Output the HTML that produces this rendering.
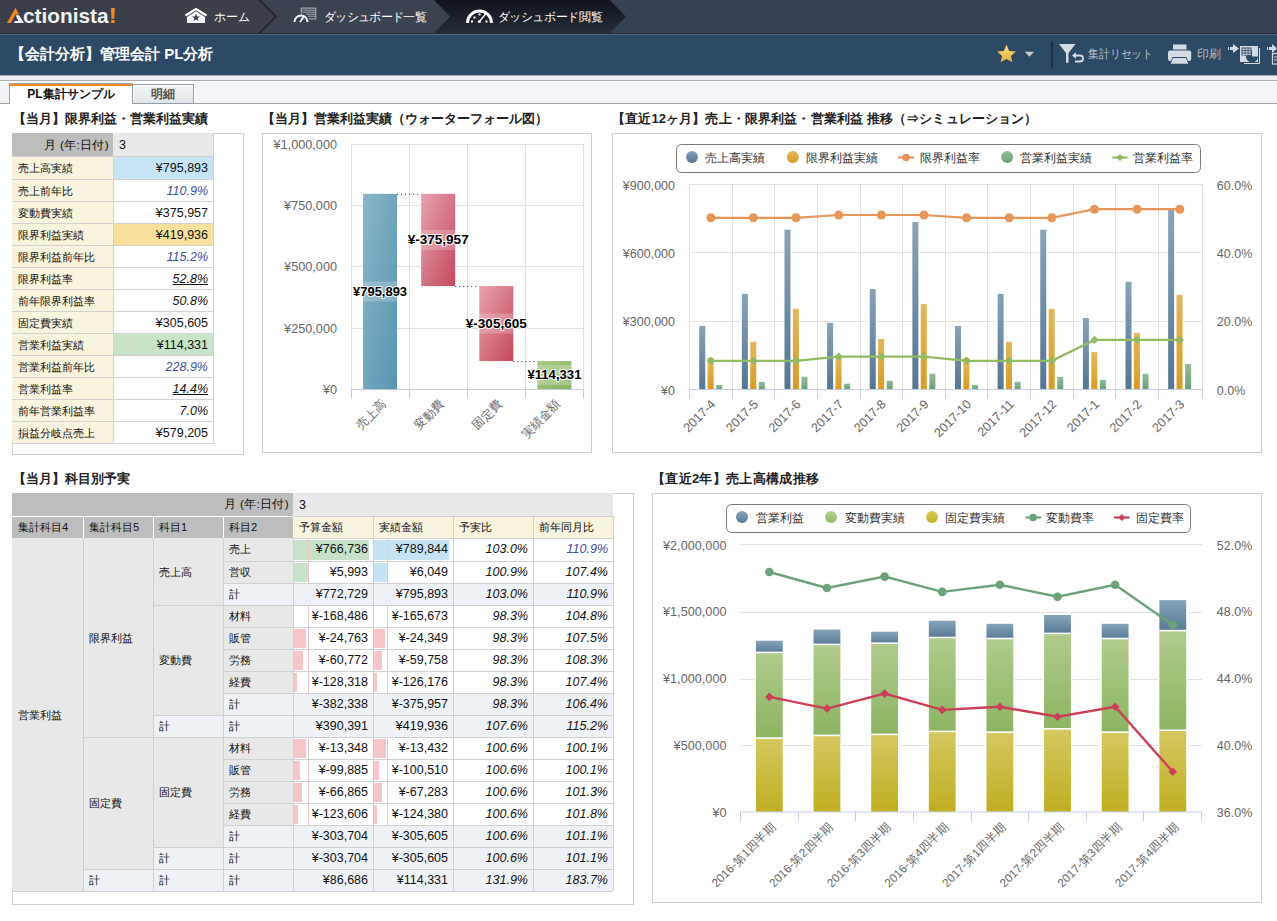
<!DOCTYPE html>
<html><head><meta charset="utf-8"><style>*{box-sizing:border-box;margin:0;padding:0}
html,body{width:1277px;height:921px;overflow:hidden;background:#fff;font-family:"Liberation Sans",sans-serif;color:#222}
.abs{position:absolute}
.ptitle{position:absolute;font-size:13px;font-weight:bold;color:#222;white-space:nowrap;line-height:16px}
.box{position:absolute;border:1px solid #cdcdcd}
.r{position:absolute}
.t{position:absolute;white-space:nowrap;font-size:11.2px;line-height:22px;color:#111}
.n{position:absolute;white-space:nowrap;font-size:12.5px;line-height:22px;color:#111;text-align:right}
.i{font-style:italic}
.bl{color:#3d4ea6}
.u{text-decoration:underline}
svg text{font-family:"Liberation Sans",sans-serif}
</style></head><body>
<svg class="abs" style="left:0;top:0" width="1277" height="34" viewBox="0 0 1277 34">
<defs>
<linearGradient id="g3" x1="0" y1="0" x2="0" y2="1"><stop offset="0" stop-color="#0f141c"/><stop offset="1" stop-color="#262d38"/></linearGradient>
<linearGradient id="gstar" x1="0" y1="0" x2="0" y2="1"><stop offset="0" stop-color="#fbe27a"/><stop offset="1" stop-color="#e6ae3a"/></linearGradient>
</defs>
<rect x="0" y="0" width="1277" height="34" fill="#3a3f4a"/>
<polygon points="259,0 434,0 450,16.5 434,33 259,33 276,16.5" fill="#3c4350"/>
<polygon points="434,0 610,0 626,16.5 610,33 434,33 450,16.5" fill="url(#g3)"/>
<polygon points="610,0 1277,0 1277,33 610,33 626,16.5" fill="#364254"/>
<polyline points="259,-0.5 276,16.5 259,33.5" fill="none" stroke="#1d2129" stroke-width="1.6"/>
<rect x="0" y="33" width="1277" height="1" fill="#262a31"/>
<!-- logo -->
<polygon points="6.9,23 15.5,7.8 19.1,14.4 15.4,14.4 10.8,23" fill="#f28a22"/>
<polygon points="15.6,15.2 19.1,15.2 24,23 13.8,23 14.9,21 18.4,21" fill="#f4f4f4"/>
<text x="23" y="23" font-family="Liberation Sans" font-weight="bold" font-size="21" fill="#f2f2f2" textLength="85.5" lengthAdjust="spacingAndGlyphs">ctionista</text>
<polygon points="111,8 114.8,8 114.3,18.8 111.5,18.8" fill="#f28a22"/><rect x="111.2" y="20" width="3.4" height="3" fill="#f28a22"/>
<!-- home icon -->
<polyline points="185.5,15.5 196,9 206.5,15.5" fill="none" stroke="#fff" stroke-width="2.2"/>
<polygon points="187,17 196,11.3 205,17 205,23 187,23" fill="#f4f5f8"/>
<polygon points="196,13.6 197.1,16.4 200,16.5 197.7,18.3 198.5,21 196,19.4 193.5,21 194.3,18.3 192,16.5 194.9,16.4" fill="#3a3f4a"/>
<text x="214" y="20.5" font-size="12" fill="#fff">ホーム</text>
<!-- list icon -->
<rect x="301.3" y="8.1" width="14.4" height="10.8" fill="none" stroke="#a4a8b0" stroke-width="1.2"/>
<path d="M302.5 10.2H315M302.5 12.2H315M306 14.2H315M308 16.2H315" stroke="#a4a8b0" stroke-width="1"/>
<path d="M294.5 22 A6.5 6.5 0 0 1 307.5 22" fill="none" stroke="#3c4350" stroke-width="4"/>
<path d="M294.5 22 A6.5 6.5 0 0 1 307.5 22" fill="none" stroke="#fff" stroke-width="2"/>
<path d="M300 22 L303.5 17" stroke="#fff" stroke-width="1.4"/>
<text x="324" y="20.5" font-size="12" fill="#fff" textLength="102.5" lengthAdjust="spacing">ダッシュボード一覧</text>
<!-- gauge icon -->
<path d="M467.5 23 A12 12 0 0 1 491.5 23" fill="none" stroke="#fff" stroke-width="3"/>
<rect x="471" y="20.5" width="2" height="2" fill="#fff"/><rect x="485.5" y="20.5" width="2" height="2" fill="#fff"/>
<rect x="473.5" y="16.5" width="2" height="2" fill="#fff"/><rect x="478.5" y="13.5" width="2" height="2" fill="#fff"/>
<path d="M479.4 21.5 L486 13.5" stroke="#fff" stroke-width="1.3"/><circle cx="479.4" cy="21.5" r="1.6" fill="#fff"/>
<text x="497.5" y="20.5" font-size="12" fill="#fff" textLength="105" lengthAdjust="spacing">ダッシュボード閲覧</text>
</svg>
<div class="r" style="left:0px;top:34px;width:1277px;height:41px;background:#2c4a66;"></div>
<div class="r" style="left:0px;top:34px;width:1277px;height:1px;background:#4a6888;"></div>
<svg class="abs" style="left:0;top:34px" width="1277" height="41" viewBox="0 34 1277 41">
<polygon points="1006.5,44.7 1009.2,50.9 1015.9,51.5 1010.9,55.9 1012.4,62.3 1006.5,58.9 1000.6,62.3 1002.1,55.9 997.1,51.5 1003.8,50.9" fill="url(#gstar)"/>
<polygon points="1024.8,51.8 1034,51.8 1029.4,56.8" fill="#c5ccd6"/>
<rect x="1051.3" y="41" width="1.4" height="27" fill="#1b2636"/>
<polygon points="1059,44 1075.5,44 1068.5,53 1068.5,62.7 1066,62.7 1066,53" fill="#d5dbe3"/>
<path d="M1074 55.5 h6 a3 3 0 0 1 0 6 h-5" fill="none" stroke="#d5dbe3" stroke-width="1.8"/>
<polygon points="1072,55.5 1076,52.2 1076,58.8" fill="#d5dbe3"/>
<text x="1088" y="58.3" font-size="11.6" fill="#b8c0ca" textLength="65" lengthAdjust="spacingAndGlyphs">集計リセット</text>
<rect x="1173" y="44.5" width="13.5" height="5" fill="#d5dbe3"/>
<rect x="1168" y="50.5" width="23.2" height="10.5" rx="2" fill="#d5dbe3"/>
<polygon points="1172.5,57 1186.5,57 1189,64 1170,64" fill="#2c4a66"/>
<polygon points="1173,58 1186,58 1188.3,63.8 1170.7,63.8" fill="#d5dbe3"/>
<text x="1197" y="58.3" font-size="11.8" fill="#b4bcc6">印刷</text>
<rect x="1228" y="47" width="1" height="3" fill="#d5dbe3"/><rect x="1230" y="47" width="3" height="3" fill="#d5dbe3"/>
<polygon points="1233,44 1239,48.5 1233,53" fill="#d5dbe3"/>
<polyline points="1259.5,48 1259.5,63.5 1244,63.5" fill="none" stroke="#d5dbe3" stroke-width="1"/>
<rect x="1240" y="46" width="18" height="16" fill="#d5dbe3"/>
<path d="M1252 56.5 L1252 50.5 A6 6 0 1 0 1258 56.5 Z" fill="#2c4a66"/>
<rect x="1241.5" y="47.5" width="10" height="8" fill="#2c4a66"/>
<g fill="#d5dbe3"><rect x="1242.5" y="48.5" width="2.2" height="1.6"/><rect x="1245.5" y="48.5" width="2.2" height="1.6"/><rect x="1248.5" y="48.5" width="2.2" height="1.6"/>
<rect x="1242.5" y="51" width="2.2" height="1.6"/><rect x="1245.5" y="51" width="2.2" height="1.6"/><rect x="1248.5" y="51" width="2.2" height="1.6"/>
<rect x="1242.5" y="53.5" width="2.2" height="1.6"/><rect x="1245.5" y="53.5" width="2.2" height="1.6"/><rect x="1248.5" y="53.5" width="2.2" height="1.6"/></g>
<rect x="1267" y="47" width="1" height="3" fill="#d5dbe3"/><rect x="1269" y="47" width="3" height="3" fill="#d5dbe3"/>
<polygon points="1272,44 1277,48.5 1272,53" fill="#d5dbe3"/>
<rect x="1272.5" y="53.5" width="6" height="10.5" fill="none" stroke="#d5dbe3" stroke-width="1.2"/>
<path d="M1274 57h3M1274 60h3" stroke="#d5dbe3" stroke-width="1"/>
</svg>
<div class="abs" style="left:10px;top:45px;font-size:15px;font-weight:bold;color:#fff;white-space:nowrap;line-height:17px">【会計分析】管理会計 PL分析</div>
<div class="r" style="left:0px;top:75px;width:1277px;height:1px;background:#a9abaf;"></div>
<div class="r" style="left:0px;top:76px;width:1277px;height:4px;background:#eceef1;"></div>
<div class="r" style="left:0px;top:80px;width:1277px;height:1px;background:#a3abb5;"></div>
<div class="r" style="left:0px;top:81px;width:1277px;height:22px;background:#ffffff;"></div>
<div class="r" style="left:0px;top:82px;width:9px;height:21px;background:#f1f3f6;"></div>
<div class="r" style="left:195px;top:82px;width:1082px;height:21px;background:#f2f4f7;"></div>
<div class="r" style="left:0px;top:103px;width:1277px;height:1px;background:#a3a3a3;"></div>
<div class="r" style="left:9px;top:83px;width:124px;height:21px;background:#fff;border:1px solid #98a2ad;border-bottom:none"></div>
<div class="r" style="left:10px;top:84px;width:122px;height:2px;background:#f28a22;"></div>
<div class="abs" style="left:9px;top:87px;width:124px;text-align:center;font-size:12px;font-weight:bold;color:#111;line-height:15px">PL集計サンプル</div>
<div class="r" style="left:132px;top:84px;width:62px;height:20px;background:linear-gradient(#f3f4f6,#e2e5e9);border:1px solid #929ca8;box-shadow:inset 1px 1px 0 #fff"></div>
<div class="abs" style="left:132px;top:87px;width:62px;text-align:center;font-size:12px;font-weight:bold;color:#555;line-height:15px">明細</div>
<div class="ptitle" style="left:13px;top:111px">【当月】限界利益・営業利益実績</div>
<div class="box" style="left:12px;top:133px;width:232px;height:322px"></div>
<div class="ptitle" style="left:262px;top:111px">【当月】営業利益実績（ウォーターフォール図）</div>
<div class="box" style="left:262px;top:133px;width:330px;height:320px"></div>
<div class="ptitle" style="left:612px;top:111px;letter-spacing:0.13px">【直近12ヶ月】売上・限界利益・営業利益 推移（⇒シミュレーション）</div>
<div class="box" style="left:612px;top:133px;width:650px;height:320px"></div>
<div class="ptitle" style="left:13px;top:471px">【当月】科目別予実</div>
<div class="box" style="left:12px;top:493px;width:622px;height:412px"></div>
<div class="ptitle" style="left:652px;top:471px;letter-spacing:0.3px">【直近2年】売上高構成推移</div>
<div class="box" style="left:652px;top:493px;width:610px;height:410px"></div>
<div class="r" style="left:12px;top:133px;width:101px;height:23px;background:#bdbdbd;"></div>
<div class="r" style="left:113px;top:133px;width:100px;height:23px;background:#e9e9e9;"></div>
<div class="t" style="left:12px;top:134px;width:97px;text-align:right;font-size:11.8px;letter-spacing:0.3px">月 (年:日付)</div>
<div class="n" style="left:119px;top:134px;text-align:left">3</div>
<div class="r" style="left:12px;top:157px;width:101px;height:22px;background:#f9f4dd;"></div>
<div class="r" style="left:114px;top:157px;width:99px;height:22px;background:#c6e4f5;"></div>
<div class="t" style="left:18px;top:157px">売上高実績</div>
<div class="n " style="left:114px;top:157px;width:94px">¥795,893</div>
<div class="r" style="left:12px;top:180px;width:101px;height:21px;background:#f9f4dd;"></div>
<div class="r" style="left:114px;top:180px;width:99px;height:21px;background:#fff;"></div>
<div class="t" style="left:18px;top:180px">売上前年比</div>
<div class="n i bl" style="left:114px;top:180px;width:94px">110.9%</div>
<div class="r" style="left:12px;top:202px;width:101px;height:21px;background:#f9f4dd;"></div>
<div class="r" style="left:114px;top:202px;width:99px;height:21px;background:#fff;"></div>
<div class="t" style="left:18px;top:202px">変動費実績</div>
<div class="n " style="left:114px;top:202px;width:94px">¥375,957</div>
<div class="r" style="left:12px;top:224px;width:101px;height:21px;background:#f9f4dd;"></div>
<div class="r" style="left:114px;top:224px;width:99px;height:21px;background:#f9e09c;"></div>
<div class="t" style="left:18px;top:224px">限界利益実績</div>
<div class="n " style="left:114px;top:224px;width:94px">¥419,936</div>
<div class="r" style="left:12px;top:246px;width:101px;height:21px;background:#f9f4dd;"></div>
<div class="r" style="left:114px;top:246px;width:99px;height:21px;background:#fff;"></div>
<div class="t" style="left:18px;top:246px">限界利益前年比</div>
<div class="n i bl" style="left:114px;top:246px;width:94px">115.2%</div>
<div class="r" style="left:12px;top:268px;width:101px;height:21px;background:#f9f4dd;"></div>
<div class="r" style="left:114px;top:268px;width:99px;height:21px;background:#fff;"></div>
<div class="t" style="left:18px;top:268px">限界利益率</div>
<div class="n i u" style="left:114px;top:268px;width:94px">52.8%</div>
<div class="r" style="left:12px;top:290px;width:101px;height:21px;background:#f9f4dd;"></div>
<div class="r" style="left:114px;top:290px;width:99px;height:21px;background:#fff;"></div>
<div class="t" style="left:18px;top:290px">前年限界利益率</div>
<div class="n i" style="left:114px;top:290px;width:94px">50.8%</div>
<div class="r" style="left:12px;top:312px;width:101px;height:21px;background:#f9f4dd;"></div>
<div class="r" style="left:114px;top:312px;width:99px;height:21px;background:#fff;"></div>
<div class="t" style="left:18px;top:312px">固定費実績</div>
<div class="n " style="left:114px;top:312px;width:94px">¥305,605</div>
<div class="r" style="left:12px;top:334px;width:101px;height:21px;background:#f9f4dd;"></div>
<div class="r" style="left:114px;top:334px;width:99px;height:21px;background:#c7e3c9;"></div>
<div class="t" style="left:18px;top:334px">営業利益実績</div>
<div class="n " style="left:114px;top:334px;width:94px">¥114,331</div>
<div class="r" style="left:12px;top:356px;width:101px;height:21px;background:#f9f4dd;"></div>
<div class="r" style="left:114px;top:356px;width:99px;height:21px;background:#fff;"></div>
<div class="t" style="left:18px;top:356px">営業利益前年比</div>
<div class="n i bl" style="left:114px;top:356px;width:94px">228.9%</div>
<div class="r" style="left:12px;top:378px;width:101px;height:21px;background:#f9f4dd;"></div>
<div class="r" style="left:114px;top:378px;width:99px;height:21px;background:#fff;"></div>
<div class="t" style="left:18px;top:378px">営業利益率</div>
<div class="n i u" style="left:114px;top:378px;width:94px">14.4%</div>
<div class="r" style="left:12px;top:400px;width:101px;height:21px;background:#f9f4dd;"></div>
<div class="r" style="left:114px;top:400px;width:99px;height:21px;background:#fff;"></div>
<div class="t" style="left:18px;top:400px">前年営業利益率</div>
<div class="n i" style="left:114px;top:400px;width:94px">7.0%</div>
<div class="r" style="left:12px;top:422px;width:101px;height:21px;background:#f9f4dd;"></div>
<div class="r" style="left:114px;top:422px;width:99px;height:21px;background:#fff;"></div>
<div class="t" style="left:18px;top:422px">損益分岐点売上</div>
<div class="n " style="left:114px;top:422px;width:94px">¥579,205</div>
<div class="r" style="left:12px;top:156px;width:201px;height:1px;background:#d2d2d2;"></div>
<div class="r" style="left:12px;top:179px;width:201px;height:1px;background:#d2d2d2;"></div>
<div class="r" style="left:12px;top:201px;width:201px;height:1px;background:#d2d2d2;"></div>
<div class="r" style="left:12px;top:223px;width:201px;height:1px;background:#d2d2d2;"></div>
<div class="r" style="left:12px;top:245px;width:201px;height:1px;background:#d2d2d2;"></div>
<div class="r" style="left:12px;top:267px;width:201px;height:1px;background:#d2d2d2;"></div>
<div class="r" style="left:12px;top:289px;width:201px;height:1px;background:#d2d2d2;"></div>
<div class="r" style="left:12px;top:311px;width:201px;height:1px;background:#d2d2d2;"></div>
<div class="r" style="left:12px;top:333px;width:201px;height:1px;background:#d2d2d2;"></div>
<div class="r" style="left:12px;top:355px;width:201px;height:1px;background:#d2d2d2;"></div>
<div class="r" style="left:12px;top:377px;width:201px;height:1px;background:#d2d2d2;"></div>
<div class="r" style="left:12px;top:399px;width:201px;height:1px;background:#d2d2d2;"></div>
<div class="r" style="left:12px;top:421px;width:201px;height:1px;background:#d2d2d2;"></div>
<div class="r" style="left:12px;top:443px;width:201px;height:1px;background:#d2d2d2;"></div>
<div class="r" style="left:113px;top:156px;width:1px;height:288px;background:#d2d2d2;"></div>
<div class="r" style="left:213px;top:133px;width:1px;height:311px;background:#d2d2d2;"></div>
<svg class="abs" style="left:0;top:0" width="1277" height="921" viewBox="0 0 1277 921"><defs>
<linearGradient id="wfb" x1="0" y1="0" x2="1" y2="1"><stop offset="0" stop-color="#8ab5c8"/><stop offset="1" stop-color="#5895b0"/></linearGradient>
<linearGradient id="wfr" x1="0" y1="0" x2="1" y2="1"><stop offset="0" stop-color="#e6a3ae"/><stop offset="1" stop-color="#c5485e"/></linearGradient>
<linearGradient id="wfg" x1="0" y1="0" x2="1" y2="1"><stop offset="0" stop-color="#a6ca80"/><stop offset="1" stop-color="#8ab463"/></linearGradient>
<linearGradient id="gb" x1="0" y1="0" x2="0" y2="1"><stop offset="0" stop-color="#87a3b8"/><stop offset="1" stop-color="#557690"/></linearGradient>
<linearGradient id="go" x1="0" y1="0" x2="0" y2="1"><stop offset="0" stop-color="#e4b85c"/><stop offset="1" stop-color="#d99a22"/></linearGradient>
<linearGradient id="gg" x1="0" y1="0" x2="0" y2="1"><stop offset="0" stop-color="#93bc9a"/><stop offset="1" stop-color="#6a9f76"/></linearGradient>
<linearGradient id="qb" x1="0" y1="0" x2="0" y2="1"><stop offset="0" stop-color="#86a5ba"/><stop offset="1" stop-color="#587a95"/></linearGradient>
<linearGradient id="qg" x1="0" y1="0" x2="0" y2="1"><stop offset="0" stop-color="#b0cc8c"/><stop offset="1" stop-color="#8cb462"/></linearGradient>
<linearGradient id="qy" x1="0" y1="0" x2="0" y2="1"><stop offset="0" stop-color="#d5c860"/><stop offset="1" stop-color="#bfae22"/></linearGradient>
<linearGradient id="qgl" x1="0" y1="0" x2="0" y2="1"><stop offset="0" stop-color="#b5d08e"/><stop offset="1" stop-color="#92b86a"/></linearGradient>
<linearGradient id="qyl" x1="0" y1="0" x2="0" y2="1"><stop offset="0" stop-color="#d9cc60"/><stop offset="1" stop-color="#c0af28"/></linearGradient>
</defs><line x1="351" y1="328.5" x2="583.5" y2="328.5" stroke="#e1e1e1" stroke-width="1"/>
<line x1="351" y1="266.5" x2="583.5" y2="266.5" stroke="#e1e1e1" stroke-width="1"/>
<line x1="351" y1="205.5" x2="583.5" y2="205.5" stroke="#e1e1e1" stroke-width="1"/>
<line x1="351" y1="144.5" x2="583.5" y2="144.5" stroke="#e1e1e1" stroke-width="1"/>
<line x1="351.5" y1="143.5" x2="351.5" y2="389.1" stroke="#e1e1e1" stroke-width="1"/>
<line x1="409.5" y1="143.5" x2="409.5" y2="389.1" stroke="#e1e1e1" stroke-width="1"/>
<line x1="467.5" y1="143.5" x2="467.5" y2="389.1" stroke="#e1e1e1" stroke-width="1"/>
<line x1="525.5" y1="143.5" x2="525.5" y2="389.1" stroke="#e1e1e1" stroke-width="1"/>
<line x1="583.5" y1="143.5" x2="583.5" y2="389.1" stroke="#e1e1e1" stroke-width="1"/>
<line x1="351" y1="389.5" x2="583.5" y2="389.5" stroke="#c3cde0" stroke-width="1"/>
<line x1="351.5" y1="389.1" x2="351.5" y2="398.3" stroke="#c3cde0" stroke-width="1"/>
<line x1="409.5" y1="389.1" x2="409.5" y2="398.3" stroke="#c3cde0" stroke-width="1"/>
<line x1="467.5" y1="389.1" x2="467.5" y2="398.3" stroke="#c3cde0" stroke-width="1"/>
<line x1="525.5" y1="389.1" x2="525.5" y2="398.3" stroke="#c3cde0" stroke-width="1"/>
<line x1="583.5" y1="389.1" x2="583.5" y2="398.3" stroke="#c3cde0" stroke-width="1"/>
<text x="337" y="394.1" font-size="12.7" fill="#666" text-anchor="end">¥0</text>
<text x="337" y="332.77" font-size="12.7" fill="#666" text-anchor="end">¥250,000</text>
<text x="337" y="271.44" font-size="12.7" fill="#666" text-anchor="end">¥500,000</text>
<text x="337" y="210.11" font-size="12.7" fill="#666" text-anchor="end">¥750,000</text>
<text x="337" y="148.78" font-size="12.7" fill="#666" text-anchor="end">¥1,000,000</text>
<rect x="363.06" y="193.85" width="34" height="195.25" fill="url(#wfb)"/>
<rect x="421.19" y="193.85" width="34" height="92.23" fill="url(#wfr)"/>
<rect x="479.31" y="286.08" width="34" height="74.97" fill="url(#wfr)"/>
<rect x="537.44" y="361.05" width="34" height="28.05" fill="url(#wfg)"/>
<line x1="397.06" y1="194.35" x2="421.19" y2="194.35" stroke="#333" stroke-width="1" stroke-dasharray="1,3"/>
<line x1="455.19" y1="286.58" x2="479.31" y2="286.58" stroke="#333" stroke-width="1" stroke-dasharray="1,3"/>
<line x1="513.31" y1="361.55" x2="537.44" y2="361.55" stroke="#333" stroke-width="1" stroke-dasharray="1,3"/>
<rect x="363.06" y="281.48" width="34" height="20" fill="#fff" fill-opacity="0.22"/>
<rect x="421.19" y="229.97" width="34" height="20" fill="#fff" fill-opacity="0.22"/>
<rect x="479.31" y="313.57" width="34" height="20" fill="#fff" fill-opacity="0.22"/>
<rect x="537.44" y="365.08" width="34" height="20" fill="#fff" fill-opacity="0.22"/>
<text x="380.06" y="295.78" font-size="12" font-weight="bold" fill="#000" text-anchor="middle" textLength="54" lengthAdjust="spacingAndGlyphs" stroke="#fff" stroke-width="2.2" stroke-opacity="0.85" paint-order="stroke" stroke-linejoin="round">¥795,893</text>
<text x="438.19" y="244.27" font-size="12" font-weight="bold" fill="#000" text-anchor="middle" textLength="61" lengthAdjust="spacingAndGlyphs" stroke="#fff" stroke-width="2.2" stroke-opacity="0.85" paint-order="stroke" stroke-linejoin="round">¥-375,957</text>
<text x="496.31" y="327.87" font-size="12" font-weight="bold" fill="#000" text-anchor="middle" textLength="61" lengthAdjust="spacingAndGlyphs" stroke="#fff" stroke-width="2.2" stroke-opacity="0.85" paint-order="stroke" stroke-linejoin="round">¥-305,605</text>
<text x="554.44" y="379.38" font-size="12" font-weight="bold" fill="#000" text-anchor="middle" textLength="54" lengthAdjust="spacingAndGlyphs" stroke="#fff" stroke-width="2.2" stroke-opacity="0.85" paint-order="stroke" stroke-linejoin="round">¥114,331</text>
<text transform="translate(386.56,405) rotate(-45)" font-size="12" fill="#666" text-anchor="end">売上高</text>
<text transform="translate(444.69,405) rotate(-45)" font-size="12" fill="#666" text-anchor="end">変動費</text>
<text transform="translate(502.81,405) rotate(-45)" font-size="12" fill="#666" text-anchor="end">固定費</text>
<text transform="translate(560.94,405) rotate(-45)" font-size="12" fill="#666" text-anchor="end">実績金額</text><line x1="689.5" y1="184.5" x2="1202.6" y2="184.5" stroke="#e1e1e1" stroke-width="1"/>
<line x1="689.5" y1="252.5" x2="1202.6" y2="252.5" stroke="#e1e1e1" stroke-width="1"/>
<line x1="689.5" y1="321.5" x2="1202.6" y2="321.5" stroke="#e1e1e1" stroke-width="1"/>
<line x1="689.5" y1="389.5" x2="1202.6" y2="389.5" stroke="#e1e1e1" stroke-width="1"/>
<line x1="689.5" y1="184.5" x2="689.5" y2="389.3" stroke="#e1e1e1" stroke-width="1"/>
<line x1="732.5" y1="184.5" x2="732.5" y2="389.3" stroke="#e1e1e1" stroke-width="1"/>
<line x1="774.5" y1="184.5" x2="774.5" y2="389.3" stroke="#e1e1e1" stroke-width="1"/>
<line x1="817.5" y1="184.5" x2="817.5" y2="389.3" stroke="#e1e1e1" stroke-width="1"/>
<line x1="860.5" y1="184.5" x2="860.5" y2="389.3" stroke="#e1e1e1" stroke-width="1"/>
<line x1="902.5" y1="184.5" x2="902.5" y2="389.3" stroke="#e1e1e1" stroke-width="1"/>
<line x1="945.5" y1="184.5" x2="945.5" y2="389.3" stroke="#e1e1e1" stroke-width="1"/>
<line x1="987.5" y1="184.5" x2="987.5" y2="389.3" stroke="#e1e1e1" stroke-width="1"/>
<line x1="1030.5" y1="184.5" x2="1030.5" y2="389.3" stroke="#e1e1e1" stroke-width="1"/>
<line x1="1073.5" y1="184.5" x2="1073.5" y2="389.3" stroke="#e1e1e1" stroke-width="1"/>
<line x1="1115.5" y1="184.5" x2="1115.5" y2="389.3" stroke="#e1e1e1" stroke-width="1"/>
<line x1="1158.5" y1="184.5" x2="1158.5" y2="389.3" stroke="#e1e1e1" stroke-width="1"/>
<line x1="1202.5" y1="184.5" x2="1202.5" y2="389.3" stroke="#e1e1e1" stroke-width="1"/>
<text x="675" y="394.6" font-size="12.5" fill="#666" text-anchor="end">¥0</text>
<text x="1216.8" y="394.6" font-size="12.5" fill="#666">0.0%</text>
<text x="675" y="326.33" font-size="12.5" fill="#666" text-anchor="end">¥300,000</text>
<text x="1216.8" y="326.33" font-size="12.5" fill="#666">20.0%</text>
<text x="675" y="258.07" font-size="12.5" fill="#666" text-anchor="end">¥600,000</text>
<text x="1216.8" y="258.07" font-size="12.5" fill="#666">40.0%</text>
<text x="675" y="189.8" font-size="12.5" fill="#666" text-anchor="end">¥900,000</text>
<text x="1216.8" y="189.8" font-size="12.5" fill="#666">60.0%</text>
<rect x="699.22" y="325.9" width="6" height="63.4" fill="url(#gb)" stroke="#fff" stroke-width="2" paint-order="stroke"/>
<rect x="707.62" y="357.8" width="6" height="31.5" fill="url(#go)" stroke="#fff" stroke-width="2" paint-order="stroke"/>
<rect x="716.22" y="384.9" width="6" height="4.4" fill="url(#gg)" stroke="#fff" stroke-width="2" paint-order="stroke"/>
<rect x="741.85" y="293.9" width="6" height="95.4" fill="url(#gb)" stroke="#fff" stroke-width="2" paint-order="stroke"/>
<rect x="750.25" y="341.7" width="6" height="47.6" fill="url(#go)" stroke="#fff" stroke-width="2" paint-order="stroke"/>
<rect x="758.85" y="381.9" width="6" height="7.4" fill="url(#gg)" stroke="#fff" stroke-width="2" paint-order="stroke"/>
<rect x="784.48" y="229.7" width="6" height="159.6" fill="url(#gb)" stroke="#fff" stroke-width="2" paint-order="stroke"/>
<rect x="792.88" y="308.8" width="6" height="80.5" fill="url(#go)" stroke="#fff" stroke-width="2" paint-order="stroke"/>
<rect x="801.48" y="376.7" width="6" height="12.6" fill="url(#gg)" stroke="#fff" stroke-width="2" paint-order="stroke"/>
<rect x="827.11" y="322.8" width="6" height="66.5" fill="url(#gb)" stroke="#fff" stroke-width="2" paint-order="stroke"/>
<rect x="835.5" y="357.4" width="6" height="31.9" fill="url(#go)" stroke="#fff" stroke-width="2" paint-order="stroke"/>
<rect x="844.11" y="383.7" width="6" height="5.6" fill="url(#gg)" stroke="#fff" stroke-width="2" paint-order="stroke"/>
<rect x="869.74" y="289" width="6" height="100.3" fill="url(#gb)" stroke="#fff" stroke-width="2" paint-order="stroke"/>
<rect x="878.13" y="339.1" width="6" height="50.2" fill="url(#go)" stroke="#fff" stroke-width="2" paint-order="stroke"/>
<rect x="886.74" y="380.7" width="6" height="8.6" fill="url(#gg)" stroke="#fff" stroke-width="2" paint-order="stroke"/>
<rect x="912.37" y="222" width="6" height="167.3" fill="url(#gb)" stroke="#fff" stroke-width="2" paint-order="stroke"/>
<rect x="920.76" y="304.1" width="6" height="85.2" fill="url(#go)" stroke="#fff" stroke-width="2" paint-order="stroke"/>
<rect x="929.37" y="373.7" width="6" height="15.6" fill="url(#gg)" stroke="#fff" stroke-width="2" paint-order="stroke"/>
<rect x="955" y="326" width="6" height="63.3" fill="url(#gb)" stroke="#fff" stroke-width="2" paint-order="stroke"/>
<rect x="963.39" y="357.8" width="6" height="31.5" fill="url(#go)" stroke="#fff" stroke-width="2" paint-order="stroke"/>
<rect x="972" y="384.9" width="6" height="4.4" fill="url(#gg)" stroke="#fff" stroke-width="2" paint-order="stroke"/>
<rect x="997.62" y="293.9" width="6" height="95.4" fill="url(#gb)" stroke="#fff" stroke-width="2" paint-order="stroke"/>
<rect x="1006.02" y="341.7" width="6" height="47.6" fill="url(#go)" stroke="#fff" stroke-width="2" paint-order="stroke"/>
<rect x="1014.62" y="381.8" width="6" height="7.5" fill="url(#gg)" stroke="#fff" stroke-width="2" paint-order="stroke"/>
<rect x="1040.26" y="229.7" width="6" height="159.6" fill="url(#gb)" stroke="#fff" stroke-width="2" paint-order="stroke"/>
<rect x="1048.65" y="308.9" width="6" height="80.4" fill="url(#go)" stroke="#fff" stroke-width="2" paint-order="stroke"/>
<rect x="1057.26" y="376.8" width="6" height="12.5" fill="url(#gg)" stroke="#fff" stroke-width="2" paint-order="stroke"/>
<rect x="1082.89" y="318" width="6" height="71.3" fill="url(#gb)" stroke="#fff" stroke-width="2" paint-order="stroke"/>
<rect x="1091.29" y="352.1" width="6" height="37.2" fill="url(#go)" stroke="#fff" stroke-width="2" paint-order="stroke"/>
<rect x="1099.89" y="379.9" width="6" height="9.4" fill="url(#gg)" stroke="#fff" stroke-width="2" paint-order="stroke"/>
<rect x="1125.52" y="281.8" width="6" height="107.5" fill="url(#gb)" stroke="#fff" stroke-width="2" paint-order="stroke"/>
<rect x="1133.91" y="332.9" width="6" height="56.4" fill="url(#go)" stroke="#fff" stroke-width="2" paint-order="stroke"/>
<rect x="1142.52" y="373.8" width="6" height="15.5" fill="url(#gg)" stroke="#fff" stroke-width="2" paint-order="stroke"/>
<rect x="1168.14" y="209.9" width="6" height="179.4" fill="url(#gb)" stroke="#fff" stroke-width="2" paint-order="stroke"/>
<rect x="1176.54" y="294.9" width="6" height="94.4" fill="url(#go)" stroke="#fff" stroke-width="2" paint-order="stroke"/>
<rect x="1185.14" y="364" width="6" height="25.3" fill="url(#gg)" stroke="#fff" stroke-width="2" paint-order="stroke"/>
<line x1="689.5" y1="389.5" x2="1202.6" y2="389.5" stroke="#c3cde0" stroke-width="1"/>
<line x1="689.5" y1="389.3" x2="689.5" y2="398.5" stroke="#c3cde0" stroke-width="1"/>
<line x1="732.5" y1="389.3" x2="732.5" y2="398.5" stroke="#c3cde0" stroke-width="1"/>
<line x1="774.5" y1="389.3" x2="774.5" y2="398.5" stroke="#c3cde0" stroke-width="1"/>
<line x1="817.5" y1="389.3" x2="817.5" y2="398.5" stroke="#c3cde0" stroke-width="1"/>
<line x1="860.5" y1="389.3" x2="860.5" y2="398.5" stroke="#c3cde0" stroke-width="1"/>
<line x1="902.5" y1="389.3" x2="902.5" y2="398.5" stroke="#c3cde0" stroke-width="1"/>
<line x1="945.5" y1="389.3" x2="945.5" y2="398.5" stroke="#c3cde0" stroke-width="1"/>
<line x1="987.5" y1="389.3" x2="987.5" y2="398.5" stroke="#c3cde0" stroke-width="1"/>
<line x1="1030.5" y1="389.3" x2="1030.5" y2="398.5" stroke="#c3cde0" stroke-width="1"/>
<line x1="1073.5" y1="389.3" x2="1073.5" y2="398.5" stroke="#c3cde0" stroke-width="1"/>
<line x1="1115.5" y1="389.3" x2="1115.5" y2="398.5" stroke="#c3cde0" stroke-width="1"/>
<line x1="1158.5" y1="389.3" x2="1158.5" y2="398.5" stroke="#c3cde0" stroke-width="1"/>
<line x1="1202.5" y1="389.3" x2="1202.5" y2="398.5" stroke="#c3cde0" stroke-width="1"/>
<polyline points="710.82,217.8 753.45,217.8 796.08,217.8 838.71,215 881.34,215 923.97,215 966.6,217.8 1009.23,217.8 1051.86,217.8 1094.49,209.2 1137.12,209.2 1179.74,209.2" fill="none" stroke="#e8955a" stroke-width="2.2"/>
<circle cx="710.82" cy="217.8" r="4.5" fill="#e8955a"/>
<circle cx="753.45" cy="217.8" r="4.5" fill="#e8955a"/>
<circle cx="796.08" cy="217.8" r="4.5" fill="#e8955a"/>
<circle cx="838.71" cy="215" r="4.5" fill="#e8955a"/>
<circle cx="881.34" cy="215" r="4.5" fill="#e8955a"/>
<circle cx="923.97" cy="215" r="4.5" fill="#e8955a"/>
<circle cx="966.6" cy="217.8" r="4.5" fill="#e8955a"/>
<circle cx="1009.23" cy="217.8" r="4.5" fill="#e8955a"/>
<circle cx="1051.86" cy="217.8" r="4.5" fill="#e8955a"/>
<circle cx="1094.49" cy="209.2" r="4.5" fill="#e8955a"/>
<circle cx="1137.12" cy="209.2" r="4.5" fill="#e8955a"/>
<circle cx="1179.74" cy="209.2" r="4.5" fill="#e8955a"/>
<polyline points="710.82,360.9 753.45,360.9 796.08,360.9 838.71,356.7 881.34,356.6 923.97,356.6 966.6,360.8 1009.23,360.8 1051.86,360.8 1094.49,339.9 1137.12,339.9 1179.74,339.9" fill="none" stroke="#92ba62" stroke-width="2.2"/>
<polygon points="710.82,356.7 715.02,360.9 710.82,365.1 706.62,360.9" fill="#92ba62"/>
<polygon points="753.45,356.7 757.65,360.9 753.45,365.1 749.25,360.9" fill="#92ba62"/>
<polygon points="796.08,356.7 800.28,360.9 796.08,365.1 791.88,360.9" fill="#92ba62"/>
<polygon points="838.71,352.5 842.91,356.7 838.71,360.9 834.5,356.7" fill="#92ba62"/>
<polygon points="881.34,352.4 885.54,356.6 881.34,360.8 877.13,356.6" fill="#92ba62"/>
<polygon points="923.97,352.4 928.17,356.6 923.97,360.8 919.76,356.6" fill="#92ba62"/>
<polygon points="966.6,356.6 970.8,360.8 966.6,365 962.39,360.8" fill="#92ba62"/>
<polygon points="1009.23,356.6 1013.43,360.8 1009.23,365 1005.02,360.8" fill="#92ba62"/>
<polygon points="1051.86,356.6 1056.06,360.8 1051.86,365 1047.65,360.8" fill="#92ba62"/>
<polygon points="1094.49,335.7 1098.69,339.9 1094.49,344.1 1090.29,339.9" fill="#92ba62"/>
<polygon points="1137.12,335.7 1141.32,339.9 1137.12,344.1 1132.91,339.9" fill="#92ba62"/>
<polygon points="1179.74,335.7 1183.94,339.9 1179.74,344.1 1175.54,339.9" fill="#92ba62"/>
<text transform="translate(716.32,405) rotate(-45)" font-size="12.7" fill="#666" text-anchor="end">2017-4</text>
<text transform="translate(758.95,405) rotate(-45)" font-size="12.7" fill="#666" text-anchor="end">2017-5</text>
<text transform="translate(801.58,405) rotate(-45)" font-size="12.7" fill="#666" text-anchor="end">2017-6</text>
<text transform="translate(844.21,405) rotate(-45)" font-size="12.7" fill="#666" text-anchor="end">2017-7</text>
<text transform="translate(886.84,405) rotate(-45)" font-size="12.7" fill="#666" text-anchor="end">2017-8</text>
<text transform="translate(929.47,405) rotate(-45)" font-size="12.7" fill="#666" text-anchor="end">2017-9</text>
<text transform="translate(972.1,405) rotate(-45)" font-size="12.7" fill="#666" text-anchor="end">2017-10</text>
<text transform="translate(1014.73,405) rotate(-45)" font-size="12.7" fill="#666" text-anchor="end">2017-11</text>
<text transform="translate(1057.36,405) rotate(-45)" font-size="12.7" fill="#666" text-anchor="end">2017-12</text>
<text transform="translate(1099.99,405) rotate(-45)" font-size="12.7" fill="#666" text-anchor="end">2017-1</text>
<text transform="translate(1142.62,405) rotate(-45)" font-size="12.7" fill="#666" text-anchor="end">2017-2</text>
<text transform="translate(1185.24,405) rotate(-45)" font-size="12.7" fill="#666" text-anchor="end">2017-3</text>
<rect x="676.5" y="144.5" width="524" height="28" rx="5" ry="5" fill="#fff" stroke="#7a7a7a" stroke-width="1"/>
<circle cx="692" cy="157" r="6" fill="url(#gb)"/>
<text x="705" y="162" font-size="12.3" fill="#333">売上高実績</text>
<circle cx="792.8" cy="157" r="6" fill="url(#go)"/>
<text x="805.5" y="162" font-size="12.3" fill="#333">限界利益実績</text>
<line x1="898" y1="157.5" x2="914" y2="157.5" stroke="#e8955a" stroke-width="2.2"/><circle cx="906" cy="157.5" r="3.8" fill="#e8955a"/>
<text x="919.5" y="162" font-size="12.3" fill="#333">限界利益率</text>
<circle cx="1007.2" cy="157" r="6" fill="url(#gg)"/>
<text x="1020" y="162" font-size="12.3" fill="#333">営業利益実績</text>
<line x1="1112.5" y1="157.5" x2="1127.5" y2="157.5" stroke="#92ba62" stroke-width="2.2"/><polygon points="1120,154 1123.5,157.5 1120,161 1116.5,157.5" fill="#92ba62"/>
<text x="1133" y="162" font-size="12.3" fill="#333">営業利益率</text><line x1="740.5" y1="544.5" x2="1201.6" y2="544.5" stroke="#e1e1e1" stroke-width="1"/>
<line x1="740.5" y1="612.5" x2="1201.6" y2="612.5" stroke="#e1e1e1" stroke-width="1"/>
<line x1="740.5" y1="679.5" x2="1201.6" y2="679.5" stroke="#e1e1e1" stroke-width="1"/>
<line x1="740.5" y1="745.5" x2="1201.6" y2="745.5" stroke="#e1e1e1" stroke-width="1"/>
<text x="726.5" y="817.1" font-size="12.7" fill="#666" text-anchor="end">¥0</text>
<text x="1216.8" y="817.1" font-size="12.5" fill="#666">36.0%</text>
<text x="726.5" y="750.2" font-size="12.7" fill="#666" text-anchor="end">¥500,000</text>
<text x="1216.8" y="750.2" font-size="12.5" fill="#666">40.0%</text>
<text x="726.5" y="683.3" font-size="12.7" fill="#666" text-anchor="end">¥1,000,000</text>
<text x="1216.8" y="683.3" font-size="12.5" fill="#666">44.0%</text>
<text x="726.5" y="616.4" font-size="12.7" fill="#666" text-anchor="end">¥1,500,000</text>
<text x="1216.8" y="616.4" font-size="12.5" fill="#666">48.0%</text>
<text x="726.5" y="549.5" font-size="12.7" fill="#666" text-anchor="end">¥2,000,000</text>
<text x="1216.8" y="549.5" font-size="12.5" fill="#666">52.0%</text>
<rect x="755.92" y="640.7" width="26.8" height="171.1" fill="#fff" stroke="#fff" stroke-width="3"/>
<rect x="755.92" y="738.1" width="26.8" height="73.7" fill="url(#qy)"/>
<rect x="755.92" y="652.4" width="26.8" height="85.7" fill="url(#qg)"/>
<rect x="755.92" y="640.7" width="26.8" height="11.7" fill="url(#qb)"/>
<rect x="755.92" y="737.3" width="26.8" height="1.6" fill="#fff"/>
<rect x="755.92" y="651.6" width="26.8" height="1.6" fill="#fff"/>
<rect x="813.56" y="629.5" width="26.8" height="182.3" fill="#fff" stroke="#fff" stroke-width="3"/>
<rect x="813.56" y="735.4" width="26.8" height="76.4" fill="url(#qy)"/>
<rect x="813.56" y="644.4" width="26.8" height="91" fill="url(#qg)"/>
<rect x="813.56" y="629.5" width="26.8" height="14.9" fill="url(#qb)"/>
<rect x="813.56" y="734.6" width="26.8" height="1.6" fill="#fff"/>
<rect x="813.56" y="643.6" width="26.8" height="1.6" fill="#fff"/>
<rect x="871.19" y="631.7" width="26.8" height="180.1" fill="#fff" stroke="#fff" stroke-width="3"/>
<rect x="871.19" y="734.4" width="26.8" height="77.4" fill="url(#qy)"/>
<rect x="871.19" y="643.2" width="26.8" height="91.2" fill="url(#qg)"/>
<rect x="871.19" y="631.7" width="26.8" height="11.5" fill="url(#qb)"/>
<rect x="871.19" y="733.6" width="26.8" height="1.6" fill="#fff"/>
<rect x="871.19" y="642.4" width="26.8" height="1.6" fill="#fff"/>
<rect x="928.83" y="620.7" width="26.8" height="191.1" fill="#fff" stroke="#fff" stroke-width="3"/>
<rect x="928.83" y="731.4" width="26.8" height="80.4" fill="url(#qy)"/>
<rect x="928.83" y="637.5" width="26.8" height="93.9" fill="url(#qg)"/>
<rect x="928.83" y="620.7" width="26.8" height="16.8" fill="url(#qb)"/>
<rect x="928.83" y="730.6" width="26.8" height="1.6" fill="#fff"/>
<rect x="928.83" y="636.7" width="26.8" height="1.6" fill="#fff"/>
<rect x="986.47" y="623.8" width="26.8" height="188" fill="#fff" stroke="#fff" stroke-width="3"/>
<rect x="986.47" y="732.2" width="26.8" height="79.6" fill="url(#qy)"/>
<rect x="986.47" y="638.5" width="26.8" height="93.7" fill="url(#qg)"/>
<rect x="986.47" y="623.8" width="26.8" height="14.7" fill="url(#qb)"/>
<rect x="986.47" y="731.4" width="26.8" height="1.6" fill="#fff"/>
<rect x="986.47" y="637.7" width="26.8" height="1.6" fill="#fff"/>
<rect x="1044.11" y="615" width="26.8" height="196.8" fill="#fff" stroke="#fff" stroke-width="3"/>
<rect x="1044.11" y="728.8" width="26.8" height="83" fill="url(#qy)"/>
<rect x="1044.11" y="633.4" width="26.8" height="95.4" fill="url(#qg)"/>
<rect x="1044.11" y="615" width="26.8" height="18.4" fill="url(#qb)"/>
<rect x="1044.11" y="728" width="26.8" height="1.6" fill="#fff"/>
<rect x="1044.11" y="632.6" width="26.8" height="1.6" fill="#fff"/>
<rect x="1101.74" y="623.8" width="26.8" height="188" fill="#fff" stroke="#fff" stroke-width="3"/>
<rect x="1101.74" y="732.2" width="26.8" height="79.6" fill="url(#qy)"/>
<rect x="1101.74" y="638.5" width="26.8" height="93.7" fill="url(#qg)"/>
<rect x="1101.74" y="623.8" width="26.8" height="14.7" fill="url(#qb)"/>
<rect x="1101.74" y="731.4" width="26.8" height="1.6" fill="#fff"/>
<rect x="1101.74" y="637.7" width="26.8" height="1.6" fill="#fff"/>
<rect x="1159.38" y="600.1" width="26.8" height="211.7" fill="#fff" stroke="#fff" stroke-width="3"/>
<rect x="1159.38" y="730.2" width="26.8" height="81.6" fill="url(#qy)"/>
<rect x="1159.38" y="630.6" width="26.8" height="99.6" fill="url(#qg)"/>
<rect x="1159.38" y="600.1" width="26.8" height="30.5" fill="url(#qb)"/>
<rect x="1159.38" y="729.4" width="26.8" height="1.6" fill="#fff"/>
<rect x="1159.38" y="629.8" width="26.8" height="1.6" fill="#fff"/>
<line x1="740.5" y1="812" x2="1201.6" y2="812" stroke="#c3cde0" stroke-width="1"/>
<line x1="740.5" y1="811.8" x2="740.5" y2="821.4" stroke="#c3cde0" stroke-width="1"/>
<line x1="798.5" y1="811.8" x2="798.5" y2="821.4" stroke="#c3cde0" stroke-width="1"/>
<line x1="855.5" y1="811.8" x2="855.5" y2="821.4" stroke="#c3cde0" stroke-width="1"/>
<line x1="913.5" y1="811.8" x2="913.5" y2="821.4" stroke="#c3cde0" stroke-width="1"/>
<line x1="971.5" y1="811.8" x2="971.5" y2="821.4" stroke="#c3cde0" stroke-width="1"/>
<line x1="1028.5" y1="811.8" x2="1028.5" y2="821.4" stroke="#c3cde0" stroke-width="1"/>
<line x1="1086.5" y1="811.8" x2="1086.5" y2="821.4" stroke="#c3cde0" stroke-width="1"/>
<line x1="1143.5" y1="811.8" x2="1143.5" y2="821.4" stroke="#c3cde0" stroke-width="1"/>
<line x1="1201.5" y1="811.8" x2="1201.5" y2="821.4" stroke="#c3cde0" stroke-width="1"/>
<polyline points="769.32,572 826.96,588 884.59,576.6 942.23,591.9 999.87,584.8 1057.51,596.7 1115.14,584.8 1172.78,624.9" fill="none" stroke="#6ba27a" stroke-width="2.4"/>
<circle cx="769.32" cy="572" r="4.3" fill="#6ba27a"/>
<circle cx="826.96" cy="588" r="4.3" fill="#6ba27a"/>
<circle cx="884.59" cy="576.6" r="4.3" fill="#6ba27a"/>
<circle cx="942.23" cy="591.9" r="4.3" fill="#6ba27a"/>
<circle cx="999.87" cy="584.8" r="4.3" fill="#6ba27a"/>
<circle cx="1057.51" cy="596.7" r="4.3" fill="#6ba27a"/>
<circle cx="1115.14" cy="584.8" r="4.3" fill="#6ba27a"/>
<circle cx="1172.78" cy="624.9" r="4.3" fill="#6ba27a"/>
<polyline points="769.32,696.9 826.96,708.6 884.59,693.6 942.23,709.9 999.87,706.8 1057.51,716.7 1115.14,706.8 1172.78,771.7" fill="none" stroke="#cc3f58" stroke-width="2.4"/>
<polygon points="769.32,692.6 773.62,696.9 769.32,701.2 765.02,696.9" fill="#cc3f58"/>
<polygon points="826.96,704.3 831.26,708.6 826.96,712.9 822.66,708.6" fill="#cc3f58"/>
<polygon points="884.59,689.3 888.89,693.6 884.59,697.9 880.29,693.6" fill="#cc3f58"/>
<polygon points="942.23,705.6 946.53,709.9 942.23,714.2 937.93,709.9" fill="#cc3f58"/>
<polygon points="999.87,702.5 1004.17,706.8 999.87,711.1 995.57,706.8" fill="#cc3f58"/>
<polygon points="1057.51,712.4 1061.81,716.7 1057.51,721 1053.21,716.7" fill="#cc3f58"/>
<polygon points="1115.14,702.5 1119.44,706.8 1115.14,711.1 1110.84,706.8" fill="#cc3f58"/>
<polygon points="1172.78,767.4 1177.08,771.7 1172.78,776 1168.48,771.7" fill="#cc3f58"/>
<text transform="translate(776.32,828) rotate(-45)" font-size="11.8" fill="#666" text-anchor="end">2016-第1四半期</text>
<text transform="translate(833.96,828) rotate(-45)" font-size="11.8" fill="#666" text-anchor="end">2016-第2四半期</text>
<text transform="translate(891.59,828) rotate(-45)" font-size="11.8" fill="#666" text-anchor="end">2016-第3四半期</text>
<text transform="translate(949.23,828) rotate(-45)" font-size="11.8" fill="#666" text-anchor="end">2016-第4四半期</text>
<text transform="translate(1006.87,828) rotate(-45)" font-size="11.8" fill="#666" text-anchor="end">2017-第1四半期</text>
<text transform="translate(1064.51,828) rotate(-45)" font-size="11.8" fill="#666" text-anchor="end">2017-第2四半期</text>
<text transform="translate(1122.14,828) rotate(-45)" font-size="11.8" fill="#666" text-anchor="end">2017-第3四半期</text>
<text transform="translate(1179.78,828) rotate(-45)" font-size="11.8" fill="#666" text-anchor="end">2017-第4四半期</text>
<rect x="726.5" y="504.5" width="464" height="28" rx="5" ry="5" fill="#fff" stroke="#7a7a7a" stroke-width="1"/>
<circle cx="742" cy="517" r="6" fill="url(#qb)"/>
<text x="755.5" y="522" font-size="12.3" fill="#333">営業利益</text>
<circle cx="831" cy="517" r="6" fill="url(#qgl)"/>
<text x="844.5" y="522" font-size="12.3" fill="#333">変動費実績</text>
<circle cx="932" cy="517" r="6" fill="url(#qyl)"/>
<text x="945" y="522" font-size="12.3" fill="#333">固定費実績</text>
<line x1="1025.5" y1="517.5" x2="1041" y2="517.5" stroke="#6ba27a" stroke-width="2.2"/><circle cx="1033" cy="517.5" r="3.8" fill="#6ba27a"/>
<text x="1045.5" y="522" font-size="12.3" fill="#333">変動費率</text>
<line x1="1114" y1="517.5" x2="1129.5" y2="517.5" stroke="#cc3f58" stroke-width="2.2"/><polygon points="1121.8,514 1125.3,517.5 1121.8,521 1118.3,517.5" fill="#cc3f58"/>
<text x="1135.5" y="522" font-size="12.3" fill="#333">固定費率</text></svg>
<div class="r" style="left:12px;top:493px;width:281px;height:23px;background:#bdbdbd;"></div>
<div class="r" style="left:293px;top:493px;width:320px;height:23px;background:#e9e9e9;"></div>
<div class="t" style="left:12px;top:493px;width:277px;text-align:right;font-size:11.8px;letter-spacing:0.3px">月 (年:日付)</div>
<div class="n" style="left:299px;top:494px;text-align:left">3</div>
<div class="r" style="left:12px;top:516px;width:281px;height:1px;background:#fff;"></div>
<div class="r" style="left:293px;top:516px;width:320px;height:1px;background:#d0d0d0;"></div>
<div class="r" style="left:12px;top:517px;width:281px;height:21px;background:#bdbdbd;"></div>
<div class="r" style="left:83px;top:517px;width:1px;height:21px;background:#fff;"></div>
<div class="r" style="left:153px;top:517px;width:1px;height:21px;background:#fff;"></div>
<div class="r" style="left:223px;top:517px;width:1px;height:21px;background:#fff;"></div>
<div class="t" style="left:18px;top:516px">集計科目4</div>
<div class="t" style="left:89px;top:516px">集計科目5</div>
<div class="t" style="left:159px;top:516px">科目1</div>
<div class="t" style="left:229px;top:516px">科目2</div>
<div class="r" style="left:293px;top:517px;width:320px;height:21px;background:#f9f4dd;"></div>
<div class="t" style="left:299px;top:516px">予算金額</div>
<div class="t" style="left:379px;top:516px">実績金額</div>
<div class="t" style="left:459px;top:516px">予実比</div>
<div class="t" style="left:539px;top:516px">前年同月比</div>
<div class="r" style="left:12px;top:538px;width:71px;height:353px;background:#e8e8e8;"></div>
<div class="r" style="left:83px;top:538px;width:70px;height:331px;background:#e8e8e8;"></div>
<div class="r" style="left:83px;top:869px;width:70px;height:22px;background:#eef1f5;"></div>
<div class="r" style="left:153px;top:538px;width:70px;height:177px;background:#e8e8e8;"></div>
<div class="r" style="left:153px;top:715px;width:70px;height:22px;background:#eef1f5;"></div>
<div class="r" style="left:153px;top:737px;width:70px;height:110px;background:#e8e8e8;"></div>
<div class="r" style="left:153px;top:847px;width:70px;height:44px;background:#eef1f5;"></div>
<div class="r" style="left:223px;top:538px;width:70px;height:23px;background:#e8e8e8;"></div>
<div class="r" style="left:293px;top:538px;width:320px;height:23px;background:#fff;"></div>
<div class="r" style="left:294px;top:540px;width:75.0px;height:20px;background:#c6e3c9;"></div>
<div class="r" style="left:307.5px;top:539px;width:1px;height:22px;background:#f2c4ca;"></div>
<div class="r" style="left:374px;top:540px;width:75.0px;height:20px;background:#c6e3f4;"></div>
<div class="r" style="left:387.0px;top:539px;width:1px;height:22px;background:#f2c4ca;"></div>
<div class="t" style="left:229px;top:538px;line-height:23px">売上</div>
<div class="n" style="left:293px;top:538px;width:75px;line-height:23px">¥766,736</div>
<div class="n" style="left:373px;top:538px;width:75px;line-height:23px">¥789,844</div>
<div class="n i" style="left:453px;top:538px;width:75px;line-height:23px">103.0%</div>
<div class="n i bl" style="left:533px;top:538px;width:75px;line-height:23px">110.9%</div>
<div class="r" style="left:223px;top:561px;width:70px;height:22px;background:#e8e8e8;"></div>
<div class="r" style="left:293px;top:561px;width:320px;height:22px;background:#fff;"></div>
<div class="r" style="left:294px;top:563px;width:14.0px;height:19px;background:#c6e3c9;"></div>
<div class="r" style="left:307.5px;top:562px;width:1px;height:21px;background:#f2c4ca;"></div>
<div class="r" style="left:374px;top:563px;width:13.5px;height:19px;background:#c6e3f4;"></div>
<div class="r" style="left:387.0px;top:562px;width:1px;height:21px;background:#f2c4ca;"></div>
<div class="t" style="left:229px;top:561px;line-height:22px">営収</div>
<div class="n" style="left:293px;top:561px;width:75px;line-height:22px">¥5,993</div>
<div class="n" style="left:373px;top:561px;width:75px;line-height:22px">¥6,049</div>
<div class="n i" style="left:453px;top:561px;width:75px;line-height:22px">100.9%</div>
<div class="n i" style="left:533px;top:561px;width:75px;line-height:22px">107.4%</div>
<div class="r" style="left:223px;top:583px;width:70px;height:22px;background:#eef1f5;"></div>
<div class="r" style="left:293px;top:583px;width:320px;height:22px;background:#eef1f5;"></div>
<div class="t" style="left:229px;top:583px;line-height:22px">計</div>
<div class="n" style="left:293px;top:583px;width:75px;line-height:22px">¥772,729</div>
<div class="n" style="left:373px;top:583px;width:75px;line-height:22px">¥795,893</div>
<div class="n i" style="left:453px;top:583px;width:75px;line-height:22px">103.0%</div>
<div class="n i" style="left:533px;top:583px;width:75px;line-height:22px">110.9%</div>
<div class="r" style="left:223px;top:605px;width:70px;height:22px;background:#e8e8e8;"></div>
<div class="r" style="left:293px;top:605px;width:320px;height:22px;background:#fff;"></div>
<div class="r" style="left:307.5px;top:606px;width:1px;height:21px;background:#f2c4ca;"></div>
<div class="r" style="left:387.0px;top:606px;width:1px;height:21px;background:#f2c4ca;"></div>
<div class="t" style="left:229px;top:605px;line-height:22px">材料</div>
<div class="n" style="left:293px;top:605px;width:75px;line-height:22px">¥-168,486</div>
<div class="n" style="left:373px;top:605px;width:75px;line-height:22px">¥-165,673</div>
<div class="n i" style="left:453px;top:605px;width:75px;line-height:22px">98.3%</div>
<div class="n i" style="left:533px;top:605px;width:75px;line-height:22px">104.8%</div>
<div class="r" style="left:223px;top:627px;width:70px;height:22px;background:#e8e8e8;"></div>
<div class="r" style="left:293px;top:627px;width:320px;height:22px;background:#fff;"></div>
<div class="r" style="left:294px;top:629px;width:11.5px;height:19px;background:#f6c5c9;"></div>
<div class="r" style="left:307.5px;top:628px;width:1px;height:21px;background:#f2c4ca;"></div>
<div class="r" style="left:374px;top:629px;width:11.1px;height:19px;background:#f6c5c9;"></div>
<div class="r" style="left:387.0px;top:628px;width:1px;height:21px;background:#f2c4ca;"></div>
<div class="t" style="left:229px;top:627px;line-height:22px">販管</div>
<div class="n" style="left:293px;top:627px;width:75px;line-height:22px">¥-24,763</div>
<div class="n" style="left:373px;top:627px;width:75px;line-height:22px">¥-24,349</div>
<div class="n i" style="left:453px;top:627px;width:75px;line-height:22px">98.3%</div>
<div class="n i" style="left:533px;top:627px;width:75px;line-height:22px">107.5%</div>
<div class="r" style="left:223px;top:649px;width:70px;height:22px;background:#e8e8e8;"></div>
<div class="r" style="left:293px;top:649px;width:320px;height:22px;background:#fff;"></div>
<div class="r" style="left:294px;top:651px;width:8.6px;height:19px;background:#f6c5c9;"></div>
<div class="r" style="left:307.5px;top:650px;width:1px;height:21px;background:#f2c4ca;"></div>
<div class="r" style="left:374px;top:651px;width:8.3px;height:19px;background:#f6c5c9;"></div>
<div class="r" style="left:387.0px;top:650px;width:1px;height:21px;background:#f2c4ca;"></div>
<div class="t" style="left:229px;top:649px;line-height:22px">労務</div>
<div class="n" style="left:293px;top:649px;width:75px;line-height:22px">¥-60,772</div>
<div class="n" style="left:373px;top:649px;width:75px;line-height:22px">¥-59,758</div>
<div class="n i" style="left:453px;top:649px;width:75px;line-height:22px">98.3%</div>
<div class="n i" style="left:533px;top:649px;width:75px;line-height:22px">108.3%</div>
<div class="r" style="left:223px;top:671px;width:70px;height:22px;background:#e8e8e8;"></div>
<div class="r" style="left:293px;top:671px;width:320px;height:22px;background:#fff;"></div>
<div class="r" style="left:294px;top:673px;width:3.2px;height:19px;background:#f6c5c9;"></div>
<div class="r" style="left:307.5px;top:672px;width:1px;height:21px;background:#f2c4ca;"></div>
<div class="r" style="left:374px;top:673px;width:3.1px;height:19px;background:#f6c5c9;"></div>
<div class="r" style="left:387.0px;top:672px;width:1px;height:21px;background:#f2c4ca;"></div>
<div class="t" style="left:229px;top:671px;line-height:22px">経費</div>
<div class="n" style="left:293px;top:671px;width:75px;line-height:22px">¥-128,318</div>
<div class="n" style="left:373px;top:671px;width:75px;line-height:22px">¥-126,176</div>
<div class="n i" style="left:453px;top:671px;width:75px;line-height:22px">98.3%</div>
<div class="n i" style="left:533px;top:671px;width:75px;line-height:22px">107.4%</div>
<div class="r" style="left:223px;top:693px;width:70px;height:22px;background:#eef1f5;"></div>
<div class="r" style="left:293px;top:693px;width:320px;height:22px;background:#eef1f5;"></div>
<div class="t" style="left:229px;top:693px;line-height:22px">計</div>
<div class="n" style="left:293px;top:693px;width:75px;line-height:22px">¥-382,338</div>
<div class="n" style="left:373px;top:693px;width:75px;line-height:22px">¥-375,957</div>
<div class="n i" style="left:453px;top:693px;width:75px;line-height:22px">98.3%</div>
<div class="n i" style="left:533px;top:693px;width:75px;line-height:22px">106.4%</div>
<div class="r" style="left:223px;top:715px;width:70px;height:22px;background:#eef1f5;"></div>
<div class="r" style="left:293px;top:715px;width:320px;height:22px;background:#eef1f5;"></div>
<div class="t" style="left:229px;top:715px;line-height:22px">計</div>
<div class="n" style="left:293px;top:715px;width:75px;line-height:22px">¥390,391</div>
<div class="n" style="left:373px;top:715px;width:75px;line-height:22px">¥419,936</div>
<div class="n i" style="left:453px;top:715px;width:75px;line-height:22px">107.6%</div>
<div class="n i" style="left:533px;top:715px;width:75px;line-height:22px">115.2%</div>
<div class="r" style="left:223px;top:737px;width:70px;height:22px;background:#e8e8e8;"></div>
<div class="r" style="left:293px;top:737px;width:320px;height:22px;background:#fff;"></div>
<div class="r" style="left:294px;top:739px;width:12.4px;height:19px;background:#f6c5c9;"></div>
<div class="r" style="left:307.5px;top:738px;width:1px;height:21px;background:#f2c4ca;"></div>
<div class="r" style="left:374px;top:739px;width:11.9px;height:19px;background:#f6c5c9;"></div>
<div class="r" style="left:387.0px;top:738px;width:1px;height:21px;background:#f2c4ca;"></div>
<div class="t" style="left:229px;top:737px;line-height:22px">材料</div>
<div class="n" style="left:293px;top:737px;width:75px;line-height:22px">¥-13,348</div>
<div class="n" style="left:373px;top:737px;width:75px;line-height:22px">¥-13,432</div>
<div class="n i" style="left:453px;top:737px;width:75px;line-height:22px">100.6%</div>
<div class="n i" style="left:533px;top:737px;width:75px;line-height:22px">100.1%</div>
<div class="r" style="left:223px;top:759px;width:70px;height:22px;background:#e8e8e8;"></div>
<div class="r" style="left:293px;top:759px;width:320px;height:22px;background:#fff;"></div>
<div class="r" style="left:294px;top:761px;width:5.5px;height:19px;background:#f6c5c9;"></div>
<div class="r" style="left:307.5px;top:760px;width:1px;height:21px;background:#f2c4ca;"></div>
<div class="r" style="left:374px;top:761px;width:5.1px;height:19px;background:#f6c5c9;"></div>
<div class="r" style="left:387.0px;top:760px;width:1px;height:21px;background:#f2c4ca;"></div>
<div class="t" style="left:229px;top:759px;line-height:22px">販管</div>
<div class="n" style="left:293px;top:759px;width:75px;line-height:22px">¥-99,885</div>
<div class="n" style="left:373px;top:759px;width:75px;line-height:22px">¥-100,510</div>
<div class="n i" style="left:453px;top:759px;width:75px;line-height:22px">100.6%</div>
<div class="n i" style="left:533px;top:759px;width:75px;line-height:22px">100.1%</div>
<div class="r" style="left:223px;top:781px;width:70px;height:22px;background:#e8e8e8;"></div>
<div class="r" style="left:293px;top:781px;width:320px;height:22px;background:#fff;"></div>
<div class="r" style="left:294px;top:783px;width:8.1px;height:19px;background:#f6c5c9;"></div>
<div class="r" style="left:307.5px;top:782px;width:1px;height:21px;background:#f2c4ca;"></div>
<div class="r" style="left:374px;top:783px;width:7.7px;height:19px;background:#f6c5c9;"></div>
<div class="r" style="left:387.0px;top:782px;width:1px;height:21px;background:#f2c4ca;"></div>
<div class="t" style="left:229px;top:781px;line-height:22px">労務</div>
<div class="n" style="left:293px;top:781px;width:75px;line-height:22px">¥-66,865</div>
<div class="n" style="left:373px;top:781px;width:75px;line-height:22px">¥-67,283</div>
<div class="n i" style="left:453px;top:781px;width:75px;line-height:22px">100.6%</div>
<div class="n i" style="left:533px;top:781px;width:75px;line-height:22px">101.3%</div>
<div class="r" style="left:223px;top:803px;width:70px;height:22px;background:#e8e8e8;"></div>
<div class="r" style="left:293px;top:803px;width:320px;height:22px;background:#fff;"></div>
<div class="r" style="left:294px;top:805px;width:3.6px;height:19px;background:#f6c5c9;"></div>
<div class="r" style="left:307.5px;top:804px;width:1px;height:21px;background:#f2c4ca;"></div>
<div class="r" style="left:374px;top:805px;width:3.2px;height:19px;background:#f6c5c9;"></div>
<div class="r" style="left:387.0px;top:804px;width:1px;height:21px;background:#f2c4ca;"></div>
<div class="t" style="left:229px;top:803px;line-height:22px">経費</div>
<div class="n" style="left:293px;top:803px;width:75px;line-height:22px">¥-123,606</div>
<div class="n" style="left:373px;top:803px;width:75px;line-height:22px">¥-124,380</div>
<div class="n i" style="left:453px;top:803px;width:75px;line-height:22px">100.6%</div>
<div class="n i" style="left:533px;top:803px;width:75px;line-height:22px">101.8%</div>
<div class="r" style="left:223px;top:825px;width:70px;height:22px;background:#eef1f5;"></div>
<div class="r" style="left:293px;top:825px;width:320px;height:22px;background:#eef1f5;"></div>
<div class="t" style="left:229px;top:825px;line-height:22px">計</div>
<div class="n" style="left:293px;top:825px;width:75px;line-height:22px">¥-303,704</div>
<div class="n" style="left:373px;top:825px;width:75px;line-height:22px">¥-305,605</div>
<div class="n i" style="left:453px;top:825px;width:75px;line-height:22px">100.6%</div>
<div class="n i" style="left:533px;top:825px;width:75px;line-height:22px">101.1%</div>
<div class="r" style="left:223px;top:847px;width:70px;height:22px;background:#eef1f5;"></div>
<div class="r" style="left:293px;top:847px;width:320px;height:22px;background:#eef1f5;"></div>
<div class="t" style="left:229px;top:847px;line-height:22px">計</div>
<div class="n" style="left:293px;top:847px;width:75px;line-height:22px">¥-303,704</div>
<div class="n" style="left:373px;top:847px;width:75px;line-height:22px">¥-305,605</div>
<div class="n i" style="left:453px;top:847px;width:75px;line-height:22px">100.6%</div>
<div class="n i" style="left:533px;top:847px;width:75px;line-height:22px">101.1%</div>
<div class="r" style="left:223px;top:869px;width:70px;height:22px;background:#eef1f5;"></div>
<div class="r" style="left:293px;top:869px;width:320px;height:22px;background:#eef1f5;"></div>
<div class="t" style="left:229px;top:869px;line-height:22px">計</div>
<div class="n" style="left:293px;top:869px;width:75px;line-height:22px">¥86,686</div>
<div class="n" style="left:373px;top:869px;width:75px;line-height:22px">¥114,331</div>
<div class="n i" style="left:453px;top:869px;width:75px;line-height:22px">131.9%</div>
<div class="n i" style="left:533px;top:869px;width:75px;line-height:22px">183.7%</div>
<div class="t" style="left:18px;top:704px">営業利益</div>
<div class="t" style="left:89px;top:627px">限界利益</div>
<div class="t" style="left:89px;top:792px">固定費</div>
<div class="t" style="left:89px;top:869px">計</div>
<div class="t" style="left:159px;top:561px">売上高</div>
<div class="t" style="left:159px;top:649px">変動費</div>
<div class="t" style="left:159px;top:715px">計</div>
<div class="t" style="left:159px;top:781px">固定費</div>
<div class="t" style="left:159px;top:847px">計</div>
<div class="t" style="left:159px;top:869px">計</div>
<div class="r" style="left:223px;top:561px;width:390px;height:1px;background:#d0d0d0;"></div>
<div class="r" style="left:223px;top:583px;width:390px;height:1px;background:#d0d0d0;"></div>
<div class="r" style="left:223px;top:605px;width:390px;height:1px;background:#d0d0d0;"></div>
<div class="r" style="left:223px;top:627px;width:390px;height:1px;background:#d0d0d0;"></div>
<div class="r" style="left:223px;top:649px;width:390px;height:1px;background:#d0d0d0;"></div>
<div class="r" style="left:223px;top:671px;width:390px;height:1px;background:#d0d0d0;"></div>
<div class="r" style="left:223px;top:693px;width:390px;height:1px;background:#d0d0d0;"></div>
<div class="r" style="left:223px;top:715px;width:390px;height:1px;background:#d0d0d0;"></div>
<div class="r" style="left:223px;top:737px;width:390px;height:1px;background:#d0d0d0;"></div>
<div class="r" style="left:223px;top:759px;width:390px;height:1px;background:#d0d0d0;"></div>
<div class="r" style="left:223px;top:781px;width:390px;height:1px;background:#d0d0d0;"></div>
<div class="r" style="left:223px;top:803px;width:390px;height:1px;background:#d0d0d0;"></div>
<div class="r" style="left:223px;top:825px;width:390px;height:1px;background:#d0d0d0;"></div>
<div class="r" style="left:223px;top:847px;width:390px;height:1px;background:#d0d0d0;"></div>
<div class="r" style="left:223px;top:869px;width:390px;height:1px;background:#d0d0d0;"></div>
<div class="r" style="left:223px;top:891px;width:390px;height:1px;background:#d0d0d0;"></div>
<div class="r" style="left:293px;top:538px;width:320px;height:1px;background:#d0d0d0;"></div>
<div class="r" style="left:153px;top:605px;width:70px;height:1px;background:#d0d0d0;"></div>
<div class="r" style="left:153px;top:715px;width:70px;height:1px;background:#d0d0d0;"></div>
<div class="r" style="left:153px;top:737px;width:70px;height:1px;background:#d0d0d0;"></div>
<div class="r" style="left:153px;top:847px;width:70px;height:1px;background:#d0d0d0;"></div>
<div class="r" style="left:153px;top:869px;width:70px;height:1px;background:#d0d0d0;"></div>
<div class="r" style="left:83px;top:737px;width:70px;height:1px;background:#d0d0d0;"></div>
<div class="r" style="left:83px;top:869px;width:70px;height:1px;background:#d0d0d0;"></div>
<div class="r" style="left:12px;top:891px;width:601px;height:1px;background:#d0d0d0;"></div>
<div class="r" style="left:83px;top:538px;width:1px;height:353px;background:#d0d0d0;"></div>
<div class="r" style="left:153px;top:538px;width:1px;height:353px;background:#d0d0d0;"></div>
<div class="r" style="left:223px;top:538px;width:1px;height:353px;background:#d0d0d0;"></div>
<div class="r" style="left:293px;top:538px;width:1px;height:353px;background:#d0d0d0;"></div>
<div class="r" style="left:373px;top:516px;width:1px;height:375px;background:#d0d0d0;"></div>
<div class="r" style="left:453px;top:516px;width:1px;height:375px;background:#d0d0d0;"></div>
<div class="r" style="left:533px;top:516px;width:1px;height:375px;background:#d0d0d0;"></div>
<div class="r" style="left:613px;top:516px;width:1px;height:375px;background:#d0d0d0;"></div>
</body></html>
